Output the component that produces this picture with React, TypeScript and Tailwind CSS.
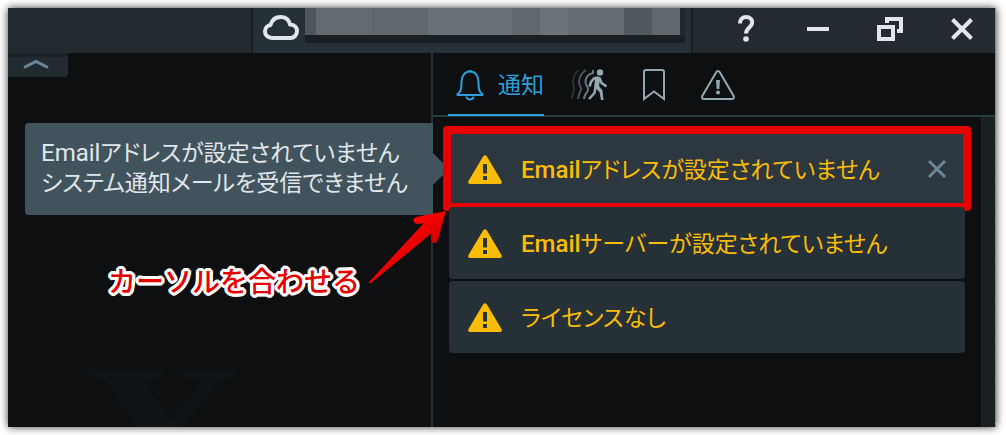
import { useState } from 'react';
import type { ReactNode } from 'react';
import clsx from 'clsx';

type Notification = {
  id: string;
  latin?: string;
  text: string;
  hint?: { latin?: string; text: string }[];
};

const notifications: Notification[] = [
  {
    id: 'email-address',
    latin: 'Email',
    text: 'アドレスが設定されていません',
    hint: [
      { latin: 'Email', text: 'アドレスが設定されていません' },
      { text: 'システム通知メールを受信できません' },
    ],
  },
  { id: 'email-server', latin: 'Email', text: 'サーバーが設定されていません' },
  { id: 'license', text: 'ライセンスなし' },
];

function CloudIcon() {
  return (
    <svg width="36" height="25" viewBox="0 0 36 25" fill="none" stroke="#e1e6ea" strokeWidth="4" strokeLinejoin="round" aria-hidden="true">
      <path d="M9 23C5 23 2 20 2 16.500C2 13 4.500 10.500 7.500 10C9 5 12.500 2 17.500 2C22.500 2 26 5 27 9.500C31.500 9.500 34 12.500 34 16C34 20 31 23 27.500 23Z" />
    </svg>
  );
}

function BellIcon() {
  return (
    <svg width="28" height="32" viewBox="0 0 28 32" fill="none" stroke="currentColor" strokeWidth="2" strokeLinejoin="round" aria-hidden="true">
      <path d="M1.500 26V25C5 23 5.500 20 5.500 13C5.500 6.500 9 2.500 14 2.500C19 2.500 22.500 6.500 22.500 13C22.500 20 23 23 26.500 25V26Z" />
      <path d="M10.500 27.500C11 31.500 17 31.500 17.500 27.500" />
      <path d="M12 2C12 0.500 16 0.500 16 2Z" fill="currentColor" stroke="none" />
    </svg>
  );
}

function MotionIcon() {
  return (
    <svg width="36" height="32" viewBox="0 0 36 32" fill="none" stroke="currentColor" strokeWidth="2" aria-hidden="true">
      <path d="M8 1C4 4 2 9 2 13C2 17 3.500 17 3 20C2.500 23 1 26 1 30" strokeOpacity="0.22" />
      <path d="M15 1C10.500 4 8 9 8 13C8 17 11 18 10 21C9 24 7.500 25 7 30" strokeOpacity="0.45" />
      <path d="M22 1V4C17 5 14.500 9 14.500 13C14.500 17 18 18 17 21C16 24 13.500 25 13 30" strokeOpacity="0.7" />
      <circle cx="29" cy="3.500" r="3.200" fill="currentColor" stroke="none" />
      <path d="M27.500 8.500L23 9.500L20 13L18.500 17.500" strokeWidth="2.500" />
      <path d="M28.500 9L30.500 14L35.500 17.500" strokeWidth="2.500" />
      <path d="M24.500 7.800L29.500 8L28 17L31.500 21.500L32.500 31H30L28.500 23L23 18Z" fill="currentColor" stroke="none" />
      <path d="M24.500 18L23.500 24L18 30" strokeWidth="2.500" />
    </svg>
  );
}

function BookmarkIcon() {
  return (
    <svg width="22" height="32" viewBox="0 0 22 32" fill="none" stroke="currentColor" strokeWidth="2" aria-hidden="true">
      <path d="M1 30V3Q1 1 3 1H19Q21 1 21 3V30L11 22.500Z" />
    </svg>
  );
}

function AlarmIcon() {
  return (
    <svg width="34" height="30" viewBox="0 0 34 30" fill="none" aria-hidden="true">
      <path d="M15.200 2.200Q17 -0.200 18.800 2.200L32.700 26Q33.500 29 31 29H3Q0.500 29 1.300 26Z" stroke="currentColor" strokeWidth="2" />
      <path d="M15 10H19L18.300 19H15.700ZM15 22.500Q15 20.500 17 20.500T19 22.500T17 24.500T15 22.500Z" fill="currentColor" />
    </svg>
  );
}

function WarningIcon() {
  return (
    <svg className="shrink-0" width="34" height="29" viewBox="0 0 34 29" aria-hidden="true">
      <path
        fill="#fbbc05"
        fillRule="evenodd"
        d="M15.200 1.300Q17 -1 18.800 1.300L33.500 26Q34.800 29 32 29H2Q-0.800 29 0.500 26ZM15 9V18.500H19V9ZM15 21V25H19V21Z"
      />
    </svg>
  );
}

function WindowControls() {
  const controls: { label: string; icon: ReactNode }[] = [
    {
      label: 'ヘルプ',
      icon: (
        <svg width="16" height="27" viewBox="0 0 16 27" fill="none" aria-hidden="true">
          <path d="M2 8.500C2 4.500 4.500 2 8.200 2C12 2 14.200 4.500 14.200 7.500C14.200 12.500 8 12.500 8 18.500" stroke="currentColor" strokeWidth="4" />
          <circle cx="8" cy="24" r="2.800" fill="currentColor" />
        </svg>
      ),
    },
    {
      label: '最小化',
      icon: (
        <svg width="22" height="4" viewBox="0 0 22 4" fill="currentColor" aria-hidden="true">
          <path d="M0 0H22V4H0Z" />
        </svg>
      ),
    },
    {
      label: '元に戻す',
      icon: (
        <svg width="26" height="24" viewBox="0 0 26 24" fill="none" stroke="currentColor" strokeWidth="4" aria-hidden="true">
          <path d="M2 10H16V22H2Z" />
          <path d="M10 6V2H24V14H20" />
        </svg>
      ),
    },
    {
      label: '閉じる',
      icon: (
        <svg width="22" height="22" viewBox="0 0 22 22" fill="none" stroke="currentColor" strokeWidth="4" aria-hidden="true">
          <path d="M1.500 1.500L20.500 20.500M20.500 1.500L1.500 20.500" />
        </svg>
      ),
    },
  ];

  return (
    <div className="flex w-[302px] shrink-0 items-center justify-end gap-10 pr-[17px] pb-1 text-[#e1e6ea]">
      {controls.map((c) => (
        <button key={c.label} type="button" aria-label={c.label} className="flex h-8 w-8 items-center justify-center">
          {c.icon}
        </button>
      ))}
    </div>
  );
}

function TitleBar() {
  return (
    <header className="flex h-[45px] shrink-0 bg-[#232b31]">
      <div className="flex-1" />
      <div className="flex w-[442px] shrink-0 items-start border-x-2 border-[#191f21] bg-[#263137]">
        <div className="flex h-full w-[52px] items-start pt-[7px] pl-2.5">
          <CloudIcon />
        </div>
        {/* account name is masked out */}
        <div className="h-[35px] w-[380px] bg-[#1a1f22]">
          <div className="flex h-[27px]">
            <div className="w-[11px] bg-[#4f575e]" />
            <div className="w-14 bg-[#636a70]" />
            <div className="w-14 bg-[#60676d]" />
            <div className="w-7 bg-[#697178]" />
            <div className="w-14 bg-[#687077]" />
            <div className="w-7 bg-[#60686e]" />
            <div className="w-7 bg-[#6b7379]" />
            <div className="w-14 bg-[#646b71]" />
            <div className="w-7 bg-[#50585f]" />
            <div className="w-7 bg-[#60686e]" />
            <div className="flex-1 bg-[#20292f]" />
          </div>
        </div>
      </div>
      <WindowControls />
    </header>
  );
}

function Annotation() {
  return (
    <p className="absolute top-[208px] left-[100px] text-[28px] leading-[44px] font-medium whitespace-nowrap text-[#e60000] [font-feature-settings:normal] [text-shadow:3px_0_#fff,-3px_0_#fff,0_3px_#fff,0_-3px_#fff,2px_2px_#fff,-2px_2px_#fff,2px_-2px_#fff,-2px_-2px_#fff,3px_1px_#fff,3px_-1px_#fff,-3px_1px_#fff,-3px_-1px_#fff,1px_3px_#fff,-1px_3px_#fff,1px_-3px_#fff,-1px_-3px_#fff]">
      カーソルを合わせる
    </p>
  );
}

function CameraView() {
  return (
    <main className="relative flex-1 overflow-hidden">
      <button
        type="button"
        aria-label="折りたたむ"
        className="flex h-6 w-[60px] items-start justify-center rounded-br border-t-4 border-[#1b2325] bg-[#222b30] pt-0.5 pr-1"
      >
        <svg width="26" height="10" viewBox="0 0 26 10" fill="none" stroke="#6b8799" strokeWidth="3" aria-hidden="true">
          <path d="M1 8.500L13 2.500L25 8.500" />
        </svg>
      </button>
      <span
        aria-hidden="true"
        className="absolute top-[274px] left-[72px] font-['Liberation_Serif',serif] text-[232px] leading-none font-bold text-[#0e1416]"
      >
        X
      </span>
      <Annotation />
    </main>
  );
}

function NotificationTabs() {
  const tab = 'flex h-full items-center pt-0.5 text-[#93a8b3]';
  return (
    <div role="tablist" className="flex h-16 shrink-0 items-center gap-9 border-b-2 border-[#2c3a42] pl-[15px]">
      <button
        type="button"
        role="tab"
        aria-selected="true"
        className="relative -mr-[9px] flex h-full w-24 items-center gap-3.5 pt-0.5 pl-2 text-[23px] leading-8 whitespace-nowrap text-[#2d9fdb]"
      >
        <BellIcon />
        <span className="pt-0.5">通知</span>
        <span className="absolute inset-x-0 -bottom-px h-0.5 bg-[#2d9fdb]" />
      </button>
      <button type="button" role="tab" aria-selected="false" aria-label="モーション" className={tab}>
        <MotionIcon />
      </button>
      <button type="button" role="tab" aria-selected="false" aria-label="ブックマーク" className={tab}>
        <BookmarkIcon />
      </button>
      <button type="button" role="tab" aria-selected="false" aria-label="イベント" className={tab}>
        <AlarmIcon />
      </button>
    </div>
  );
}

function HintTooltip({ lines }: { lines: { latin?: string; text: string }[] }) {
  return (
    <div
      role="tooltip"
      className="absolute -top-2.5 right-full mr-4 w-[408px] rounded-l bg-[#41535d] p-4 text-[23px] leading-[30px] whitespace-nowrap text-[#e1e6ea]"
    >
      {lines.map((line) => (
        <p key={line.text}>
          {line.latin && <span className="text-2xl leading-none">{line.latin}</span>}
          {line.text}
        </p>
      ))}
      <svg className="absolute top-[30px] left-full" width="16" height="32" viewBox="0 0 16 32" fill="#41535d" aria-hidden="true">
        <path d="M0 0L16 16L0 32Z" />
      </svg>
    </div>
  );
}

function PointerArrow() {
  return (
    <svg className="absolute top-[78px] right-full mr-[3px]" width="78" height="74" viewBox="0 0 78 74" aria-hidden="true">
      <defs>
        <linearGradient id="arrow" x1="0.400" y1="0.400" x2="0.700" y2="0.700">
          <stop offset="0" stopColor="#ff0000" />
          <stop offset="1" stopColor="#c80000" />
        </linearGradient>
      </defs>
      <path
        fill="url(#arrow)"
        d="M78 0L48 6Q44 8 46 11Q47 13 50 13L56 12L1 71Q1 73 3 72L64 22L63 28Q63 32 66 32Q69 32 70 29Z"
      />
    </svg>
  );
}

function NotificationItem({ item, active, onDismiss }: { item: Notification; active: boolean; onDismiss: () => void }) {
  return (
    <li
      className={clsx(
        'relative flex h-[72px] items-center rounded pr-[18px] pl-[19px] text-[23px] text-[#fbbc05]',
        active ? 'bg-[#2c373f]' : 'bg-[#263137]',
      )}
    >
      <WarningIcon />
      <span className="ml-[19px] flex-1 pt-1 whitespace-nowrap">
        {item.latin && <span className="text-2xl leading-none font-medium">{item.latin}</span>}
        {item.text}
      </span>
      {active && (
        <button type="button" aria-label="閉じる" onClick={onDismiss} className="text-[#6b8799]">
          <svg width="20" height="20" viewBox="0 0 20 20" fill="none" stroke="currentColor" strokeWidth="3" aria-hidden="true">
            <path d="M2 2L18 18M18 2L2 18" />
          </svg>
        </button>
      )}
      {active && item.hint && <HintTooltip lines={item.hint} />}
      {active && (
        <>
          <div className="pointer-events-none absolute -inset-x-1.5 -top-[7px] -bottom-1.5 rounded border-8 border-[#e60000]" />
          <PointerArrow />
        </>
      )}
    </li>
  );
}

export default function App() {
  const [items, setItems] = useState(notifications);

  return (
    <div className="flex min-h-screen bg-white pt-2 pr-2.5 pb-2 pl-2 font-[Roboto,'Noto_Sans_CJK_JP',sans-serif] [font-feature-settings:'palt']">
      <div className="flex flex-1 flex-col border-r border-dashed border-[#4a90e2] bg-[#0d0f10] bg-clip-padding shadow-[0_0_8px_rgba(0,0,0,0.8)]">
        <TitleBar />
        <div className="flex flex-1">
          <CameraView />
          <aside className="flex w-[564px] shrink-0 flex-col border-l-2 border-[#263137]">
            <NotificationTabs />
            <div className="flex flex-1">
              <ul className="flex flex-1 flex-col gap-0.5 p-4">
                {items.map((item) => (
                  <NotificationItem
                    key={item.id}
                    item={item}
                    active={item.id === 'email-address'}
                    onDismiss={() => setItems(items.filter((n) => n.id !== item.id))}
                  />
                ))}
              </ul>
              <div className="w-3.5 bg-[#182022]" />
            </div>
          </aside>
        </div>
      </div>
    </div>
  );
}
